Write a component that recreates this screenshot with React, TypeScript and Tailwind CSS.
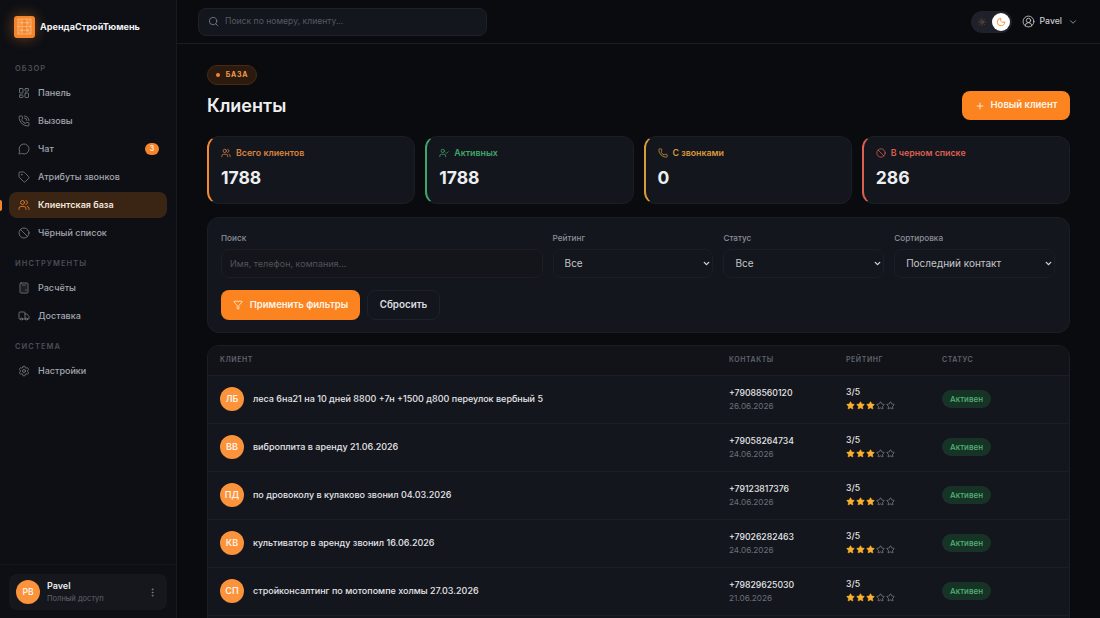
import {
  Ban,
  Calculator,
  ChevronDown,
  CircleUserRound,
  EllipsisVertical,
  Funnel,
  LayoutDashboard,
  MessageCircle,
  Moon,
  Phone,
  PhoneCall,
  Plus,
  Search,
  Settings,
  Star,
  Sun,
  Tag,
  Truck,
  UserCheck,
  Users,
} from 'lucide-react'

const NAV = [
  {
    title: 'Обзор',
    items: [
      { label: 'Панель', icon: LayoutDashboard },
      { label: 'Вызовы', icon: PhoneCall },
      { label: 'Чат', icon: MessageCircle, badge: '3' },
      { label: 'Атрибуты звонков', icon: Tag },
      { label: 'Клиентская база', icon: Users, active: true },
      { label: 'Чёрный список', icon: Ban },
    ],
  },
  {
    title: 'Инструменты',
    items: [
      { label: 'Расчёты', icon: Calculator },
      { label: 'Доставка', icon: Truck },
    ],
  },
  {
    title: 'Система',
    items: [{ label: 'Настройки', icon: Settings }],
  },
]

const STATS = [
  { label: 'Всего клиентов', value: '1788', icon: Users, border: 'border-l-[#f58a2e]', text: 'text-[#d9813c]' },
  { label: 'Активных', value: '1788', icon: UserCheck, border: 'border-l-[#3fa66b]', text: 'text-[#3fa66b]' },
  { label: 'С звонками', value: '0', icon: Phone, border: 'border-l-[#d99a3a]', text: 'text-[#d99a3a]' },
  { label: 'В черном списке', value: '286', icon: Ban, border: 'border-l-[#dd5f52]', text: 'text-[#dd5f52]' },
]

const CLIENTS = [
  { initials: 'ЛБ', name: 'леса 6на21 на 10 дней 8800 +7н +1500 д800 переулок вербный 5', phone: '+79088560120', date: '26.06.2026' },
  { initials: 'ВВ', name: 'виброплита в аренду 21.06.2026', phone: '+79058264734', date: '24.06.2026' },
  { initials: 'ПД', name: 'по дровоколу в кулаково звонил 04.03.2026', phone: '+79123817376', date: '24.06.2026' },
  { initials: 'КВ', name: 'культиватор в аренду звонил 16.06.2026', phone: '+79026282463', date: '24.06.2026' },
  { initials: 'СП', name: 'стройконсалтинг по мотопомпе холмы 27.03.2026', phone: '+79829625030', date: '21.06.2026' },
]

function Logo() {
  return (
    <div className="flex h-[22px] w-[21px] items-center justify-center rounded-[3px] bg-[#f5842a] shadow-[0_0_14px_rgba(245,132,42,0.45)]">
      <svg width="15" height="17" viewBox="0 0 16 18" fill="none" stroke="#ffd0a3" strokeWidth="0.6">
        <path d="M1 1h14M1 5h14M1 9h14M1 13h14M1 17h14M1 1v16M5.500 1v16M10.500 1v16M15 1v16M1 1l4.500 4M5.500 5L1 9M1 9l4.500 4M5.500 13L1 17M15 1l-4.500 4M10.500 5L15 9M15 9l-4.500 4M10.500 13L15 17" />
      </svg>
    </div>
  )
}

function Sidebar() {
  return (
    <aside className="flex h-full w-[177px] shrink-0 flex-col border-r border-[#171a21] bg-[#0d0f14]">
      <div className="flex h-[43px] items-center gap-[5px] pl-[14px] pt-[10px]">
        <Logo />
        <span className="text-[9.100px] font-bold text-[#f1f2f4]">АрендаСтройТюмень</span>
      </div>
      <nav className="flex-1 px-[9px] pt-[20px]">
        {NAV.map((section) => (
          <div key={section.title} className="mb-[12px]">
            <p className="mb-[5px] pl-[6px] text-[7.500px] font-semibold uppercase leading-[12px] tracking-[0.14em] text-[#4a4e59]">
              {section.title}
            </p>
            <div className="flex flex-col gap-[2px]">
              {section.items.map((item) => (
                <div
                  key={item.label}
                  className={`relative flex h-[26px] items-center gap-[8px] rounded-lg pl-[9px] pr-[8px] text-[9px] font-medium ${
                    item.active ? 'bg-[#3a2414] font-semibold text-[#f0e6dc]' : 'text-[#a3a7b0]'
                  }`}
                >
                  {item.active && <span className="absolute -left-[9px] top-[8px] h-[11px] w-[2px] rounded-r bg-[#f5842a]" />}
                  <item.icon size={12} strokeWidth={1.6} className={item.active ? 'text-[#f5842a]' : 'text-[#7c808a]'} />
                  <span className="flex-1">{item.label}</span>
                  {item.badge && (
                    <span className="flex h-[12px] w-[14px] items-center justify-center rounded-full bg-[#f5842a] text-[7px] font-semibold text-[#fff2e3]">
                      {item.badge}
                    </span>
                  )}
                </div>
              ))}
            </div>
          </div>
        ))}
      </nav>
      <div className="border-t border-[#14161c] px-[9px] pb-[8px] pt-[9px]">
        <div className="flex h-[36px] items-center gap-[7px] rounded-lg bg-[#15171d] pl-[7px] pr-[9px]">
          <div className="flex h-[24px] w-[24px] items-center justify-center rounded-full bg-[#fb923c] text-[8.500px] font-semibold text-[#fff1e4]">
            PB
          </div>
          <div className="flex-1">
            <p className="text-[9px] font-semibold leading-[13px] text-[#e9eaec]">Pavel</p>
            <p className="text-[7.500px] leading-[13px] text-[#5f636e]">Полный доступ</p>
          </div>
          <EllipsisVertical size={11} className="text-[#7c808a]" />
        </div>
      </div>
    </aside>
  )
}

function Topbar() {
  return (
    <header className="flex h-[44px] shrink-0 items-center justify-between border-b border-[#1a1d25] pl-[21px] pr-[22px]">
      <div className="flex h-[28px] w-[289px] items-center gap-[6px] rounded-lg border border-[#1e212a] bg-[#14161d] px-[9px]">
        <Search size={11} strokeWidth={1.8} className="text-[#7c808a]" />
        <span className="text-[8.600px] text-[#555964]">Поиск по номеру, клиенту...</span>
      </div>
      <div className="flex items-center">
        <div className="flex h-[22px] w-[41px] items-center justify-between rounded-full bg-[#1e2129] pl-[7px] pr-[2px]">
          <Sun size={8} className="text-[#7a5a3a]" />
          <span className="flex h-[18px] w-[18px] items-center justify-center rounded-full bg-white">
            <Moon size={10} className="text-[#f5842a]" />
          </span>
        </div>
        <CircleUserRound size={13} strokeWidth={1.6} className="ml-[10px] text-[#c9cbd0]" />
        <span className="ml-[5px] text-[8.700px] font-medium text-[#c9cbd0]">Pavel</span>
        <ChevronDown size={10} className="ml-[6px] text-[#a3a7b0]" />
      </div>
    </header>
  )
}

function StatCards() {
  return (
    <div className="grid grid-cols-4 gap-[10px]">
      {STATS.map((s) => (
        <div key={s.label} className={`h-[68px] rounded-xl border border-[#1b1e26] border-l-2 bg-[#14161d] pl-[12px] pt-[9px] ${s.border}`}>
          <div className={`flex items-center gap-[5px] text-[8.800px] font-semibold leading-[14px] ${s.text}`}>
            <s.icon size={10} strokeWidth={1.8} />
            {s.label}
          </div>
          <p className="mt-[6px] text-[17.500px] font-bold leading-[24px] text-[#eceef0]">{s.value}</p>
        </div>
      ))}
    </div>
  )
}

function FilterSelect({ label, value }: { label: string; value: string }) {
  return (
    <label className="block">
      <span className="block text-[8.200px] font-medium leading-[14px] text-[#8b8f99]">{label}</span>
      <div className="relative mt-[4px]">
        <select
          defaultValue={value}
          className="h-[29px] w-full appearance-none rounded-lg border border-[#1b1e26] bg-[#14161d] pl-[11px] pr-[12px] text-[10px] text-[#c4c6cb] outline-none"
        >
          <option>{value}</option>
        </select>
        <ChevronDown size={9} strokeWidth={3.5} className="pointer-events-none absolute right-[2px] top-[10px] text-[#d5d7db]" />
      </div>
    </label>
  )
}

function Filters() {
  return (
    <div className="mt-[13px] h-[116px] rounded-xl border border-[#1b1e26] bg-[#14161d] pl-[13px] pr-[14px] pt-[13px]">
      <div className="grid grid-cols-[2fr_1fr_1fr_1fr] gap-[10px]">
        <label className="block">
          <span className="block text-[8.200px] font-medium leading-[14px] text-[#8b8f99]">Поиск</span>
          <input
            placeholder="Имя, телефон, компания..."
            className="mt-[4px] h-[29px] w-full rounded-lg border border-[#1b1e26] bg-[#13151b] px-[8px] text-[9px] text-[#c4c6cb] outline-none placeholder:text-[#4f535d]"
          />
        </label>
        <FilterSelect label="Рейтинг" value="Все" />
        <FilterSelect label="Статус" value="Все" />
        <FilterSelect label="Сортировка" value="Последний контакт" />
      </div>
      <div className="mt-[12px] flex gap-[7px]">
        <button className="flex h-[30px] w-[139px] items-center justify-center gap-[7px] rounded-lg bg-[#fb8420] text-[9.500px] font-semibold text-[#fff3e6]">
          <Funnel size={10} strokeWidth={1.8} />
          Применить фильтры
        </button>
        <button className="h-[30px] w-[73px] rounded-lg border border-[#1e212a] text-[9.800px] font-semibold text-[#dcdee1]">
          Сбросить
        </button>
      </div>
    </div>
  )
}

function Stars() {
  return (
    <div className="mt-[3px] flex gap-[1px]">
      {[0, 1, 2, 3, 4].map((i) => (
        <Star
          key={i}
          size={9}
          strokeWidth={1.5}
          className={i < 3 ? 'fill-[#fbb02d] text-[#fbb02d]' : 'text-[#a3a7b0]'}
        />
      ))}
    </div>
  )
}

function ClientsTable() {
  return (
    <div className="mt-[12px] overflow-hidden rounded-xl border border-[#1b1e26] bg-[#14161d]">
      <table className="w-full table-fixed border-collapse text-left">
        <colgroup>
          <col className="w-[509px]" />
          <col className="w-[117px]" />
          <col className="w-[96px]" />
          <col />
        </colgroup>
        <thead>
          <tr className="h-[29px] border-b border-[#1b1e26] bg-[#111319] text-[7px] font-semibold uppercase tracking-[0.08em] text-[#5f636e]">
            <th className="pl-[12px] font-semibold">Клиент</th>
            <th className="pl-[12px] font-semibold">Контакты</th>
            <th className="pl-[12px] font-semibold">Рейтинг</th>
            <th className="pl-[12px] font-semibold">Статус</th>
          </tr>
        </thead>
        <tbody>
          {CLIENTS.map((c) => (
            <tr key={c.phone} className="h-[48px] border-b border-[#1b1e26]">
              <td className="pl-[12px]">
                <div className="flex items-center gap-[9px]">
                  <div className="flex h-[24px] w-[24px] items-center justify-center rounded-full bg-[#fb923c] text-[9px] font-semibold text-[#fff1e4]">
                    {c.initials}
                  </div>
                  <span className="text-[9px] font-medium text-[#e4e5e8]">{c.name}</span>
                </div>
              </td>
              <td className="pl-[12px] pt-[2px]">
                <p className="text-[8.700px] font-medium leading-[13px] text-[#e4e5e8]">{c.phone}</p>
                <p className="text-[8.200px] leading-[13px] text-[#6b6f79]">{c.date}</p>
              </td>
              <td className="pb-[2px] pl-[12px]">
                <p className="text-[8.700px] font-medium leading-[12px] text-[#e4e5e8]">3/5</p>
                <Stars />
              </td>
              <td className="pl-[12px]">
                <span className="flex h-[18px] w-[49px] items-center justify-center rounded-full bg-[#173326] text-[8px] font-medium text-[#4fb577]">
                  Активен
                </span>
              </td>
            </tr>
          ))}
        </tbody>
      </table>
      <div className="h-[48px]" />
    </div>
  )
}

export default function App() {
  return (
    <div className="flex h-[618px] w-full overflow-hidden bg-[#0a0b0f] font-['Inter',sans-serif]">
      <Sidebar />
      <div className="flex min-w-0 flex-1 flex-col">
        <Topbar />
        <main className="flex-1 overflow-hidden px-[30px] pt-[15px]">
          <div className="flex items-end justify-between">
            <div>
              <span className="inline-flex h-[20px] w-[50px] items-center justify-center gap-[6px] rounded-full border border-[#4a2a14] bg-[#2b1a0e] text-[7px] font-bold tracking-[0.1em] text-[#f09a52]">
                <span className="h-[4px] w-[4px] rounded-full bg-[#f5842a]" />
                БАЗА
              </span>
              <h1 className="mt-[8px] text-[18px] font-semibold leading-[26px] text-[#eeeff1]">Клиенты</h1>
            </div>
            <button className="-mb-[1px] flex h-[29px] w-[108px] items-center justify-center gap-[6px] rounded-lg bg-[#fb8420] text-[9.500px] font-semibold text-[#fff3e6]">
              <Plus size={10} strokeWidth={2} />
              Новый клиент
            </button>
          </div>
          <div className="mt-[17px]">
            <StatCards />
          </div>
          <Filters />
          <ClientsTable />
        </main>
      </div>
    </div>
  )
}
